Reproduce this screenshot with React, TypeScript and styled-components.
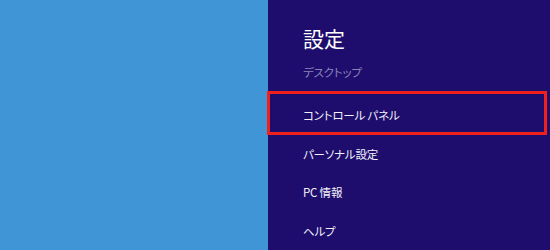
import React from "react";
import styled, { createGlobalStyle } from "styled-components";

const Global = createGlobalStyle`
  html, body { margin: 0; padding: 0; background: #1e0d6c; }
  #root { width: 550px; height: 250px; overflow: hidden; }
`;

const Screen = styled.div`
  display: flex;
  width: 550px;
  height: 250px;
  font-family: "Noto Sans CJK JP", "Noto Sans", sans-serif;
  font-feature-settings: "palt";
`;

const Desktop = styled.div`
  width: 268px;
  flex: none;
  background: #3f95d6;
`;

const Charm = styled.div`
  flex: 1;
  background: #1e0d6c;
  display: flex;
  flex-direction: column;
  padding: 22px 0 0 35px;
  color: #ffffff;
`;

const Title = styled.h1`
  margin: 0;
  font-size: 21px;
  font-weight: 400;
  line-height: 32px;
  letter-spacing: 0px;
`;

const Item = styled.div<{ $muted?: boolean; $highlight?: boolean }>`
  position: relative;
  height: 40px;
  display: flex;
  align-items: center;
  font-size: 11.5px;
  line-height: 16px;
  letter-spacing: -0.2px;
  color: ${(p) => (p.$muted ? "#8a84bb" : "#f2f0fa")};
  ${(p) =>
    p.$highlight &&
    `
    &::after {
      content: "";
      position: absolute;
      left: -36px;
      right: 3px;
      top: -5px;
      bottom: -1px;
      border: 3.5px solid #f0201c;
    }
  `}
`;

const SubHead = styled(Item)`
  height: 34px;
  margin-top: 2px;
  margin-bottom: 7px;
`;

export default function App() {
  return (
    <>
      <Global />
      <Screen>
        <Desktop />
        <Charm>
          <Title>設定</Title>
          <SubHead $muted>デスクトップ</SubHead>
          <Item $highlight>コントロール パネル</Item>
          <Item>パーソナル設定</Item>
          <Item>PC 情報</Item>
          <Item>ヘルプ</Item>
        </Charm>
      </Screen>
    </>
  );
}
